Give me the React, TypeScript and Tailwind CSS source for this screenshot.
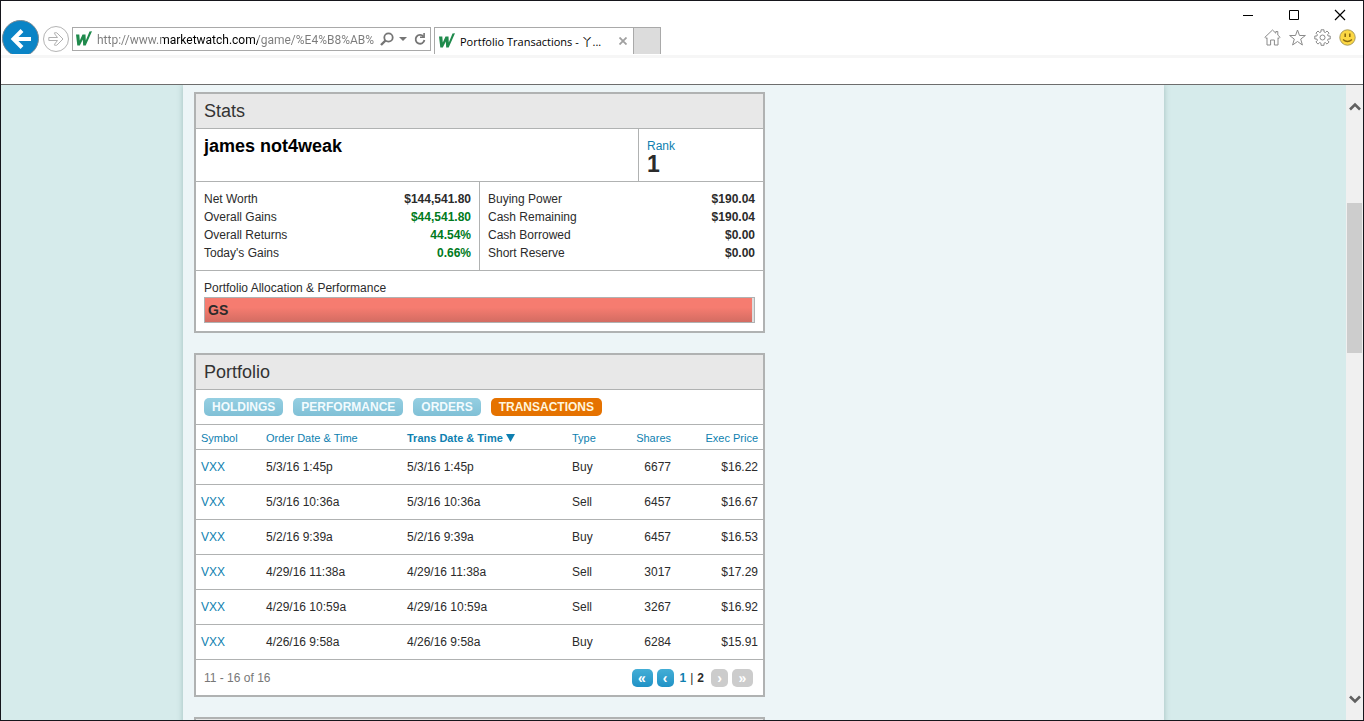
import type { ReactNode } from "react";

const accountStats = [
  { label: "Net Worth", value: "$144,541.80" },
  { label: "Overall Gains", value: "$44,541.80", gain: true },
  { label: "Overall Returns", value: "44.54%", gain: true },
  { label: "Today's Gains", value: "0.66%", gain: true },
];

const cashStats = [
  { label: "Buying Power", value: "$190.04" },
  { label: "Cash Remaining", value: "$190.04" },
  { label: "Cash Borrowed", value: "$0.00" },
  { label: "Short Reserve", value: "$0.00" },
];

const tabs = ["HOLDINGS", "PERFORMANCE", "ORDERS", "TRANSACTIONS"];

const transactions = [
  { symbol: "VXX", ordered: "5/3/16 1:45p", executed: "5/3/16 1:45p", type: "Buy", shares: 6677, price: "$16.22" },
  { symbol: "VXX", ordered: "5/3/16 10:36a", executed: "5/3/16 10:36a", type: "Sell", shares: 6457, price: "$16.67" },
  { symbol: "VXX", ordered: "5/2/16 9:39a", executed: "5/2/16 9:39a", type: "Buy", shares: 6457, price: "$16.53" },
  { symbol: "VXX", ordered: "4/29/16 11:38a", executed: "4/29/16 11:38a", type: "Sell", shares: 3017, price: "$17.29" },
  { symbol: "VXX", ordered: "4/29/16 10:59a", executed: "4/29/16 10:59a", type: "Sell", shares: 3267, price: "$16.92" },
  { symbol: "VXX", ordered: "4/26/16 9:58a", executed: "4/26/16 9:58a", type: "Buy", shares: 6284, price: "$15.91" },
];

function SiteIcon() {
  return (
    <svg viewBox="0 0 16 16" className="size-4 shrink-0" fill="#1f8a4c" aria-hidden="true">
      <path d="M0 3.500h3.300l.5 6 2.700-6h3l.3 6L13.500.5 16 .3 9.700 14.500H7.200L6.800 8.500 3.800 14.500H1.300z" />
    </svg>
  );
}

function WindowControls() {
  return (
    <div className="flex h-[26px] items-center justify-end gap-[23px] pt-0.5 pr-3">
      <button aria-label="Minimize" className="flex size-[23px] items-center justify-center">
        <svg viewBox="0 0 12 12" className="size-3" stroke="#000">
          <path d="M1 6.500h10" />
        </svg>
      </button>
      <button aria-label="Maximize" className="flex size-[23px] items-center justify-center">
        <svg viewBox="0 0 12 12" className="size-3" fill="none" stroke="#000">
          <path d="M1.500 1.500h9v9h-9z" />
        </svg>
      </button>
      <button aria-label="Close" className="flex size-[23px] items-center justify-center">
        <svg viewBox="0 0 12 12" className="size-3" stroke="#000" strokeWidth="1.200">
          <path d="m1 1 10 10M11 1 1 11" />
        </svg>
      </button>
    </div>
  );
}

function BrowserTools() {
  return (
    <div className="flex items-center justify-end gap-2 pt-0.5 pr-[7px]">
      <button aria-label="Home">
        <svg viewBox="0 0 17 17" className="size-[17px]" fill="none" stroke="#8a8a8a">
          <path d="M8.500 1 .9 8.300l1.200 1.200.9-.8v7.300h3.600v-5h3.800v5H14V8.700l.9.8 1.200-1.200-2.300-2.200V2.500h-2v1.700z" />
        </svg>
      </button>
      <button aria-label="Favorites">
        <svg viewBox="0 0 17 17" className="size-[17px]" fill="none" stroke="#8a8a8a">
          <path d="m8.500 1 2 5.500h5.900l-4.700 3.600 1.700 5.900-4.900-3.500L3.600 16l1.700-5.900L.6 6.500h5.900z" />
        </svg>
      </button>
      <button aria-label="Settings">
        <svg viewBox="0 0 17 17" className="size-[17px]" fill="none" stroke="#8a8a8a">
          <path d="M7 .8h3v2.100l1.400.6 1.600-1.500 2.100 2.100-1.500 1.600.5 1.300h2.100v3h-2.100l-.5 1.400 1.500 1.600-2.100 2.100-1.600-1.500-1.400.6v2.100H7v-2.100l-1.400-.6L4 15.100 1.900 13l1.500-1.600-.5-1.400H.8V7h2.100l.5-1.300-1.500-1.600L4 2l1.600 1.500L7 2.900z" />
          <circle cx="8.500" cy="8.500" r="2.500" />
        </svg>
      </button>
      <button aria-label="Feedback">
        <svg viewBox="0 0 17 17" className="size-[17px]" fill="none">
          <circle cx="8.500" cy="8.500" r="7.700" fill="#fcd743" stroke="#a89a5a" />
          <path d="M6.200 4.500v3.500M10.800 4.500v3.500" stroke="#8a6a10" strokeWidth="1.600" />
          <path d="M4 10.500q4.500 4 9 0" stroke="#8a6a10" strokeWidth="1.200" />
        </svg>
      </button>
    </div>
  );
}

function BrowserBar() {
  return (
    <header className="border-b border-[#6d6d6d] bg-white font-['Open_Sans',sans-serif]">
      <div className="flex h-[53px] items-start overflow-hidden">
        <button
          aria-label="Back"
          className="mt-[19px] ml-px flex size-[37px] shrink-0 items-center justify-center rounded-full border border-[#7a8a94] bg-[#0a84c6]"
        >
          <svg viewBox="0 0 22 20" className="h-5 w-[22px]" fill="none" stroke="#fff" strokeWidth="4">
            <path d="M21 10H4M12 1.500 3.500 10l8.500 8.500" />
          </svg>
        </button>
        <button
          aria-label="Forward"
          className="mt-[25px] ml-1 flex size-[26px] shrink-0 items-center justify-center rounded-full border border-[#b4b4b4]"
        >
          <svg viewBox="0 0 16 14" className="h-3.5 w-4" fill="none" stroke="#b0b0b0">
            <path d="M.8 5.500h8.700L6.500 1.700V.8h2.300L15 7l-6.200 6.200H6.500v-.9l3-3.800H.8z" />
          </svg>
        </button>
        <div className="mt-[26px] ml-[3px] flex h-6 w-[359px] items-center border border-[#a9a9a9] pr-1 pl-[3px]">
          <SiteIcon />
          {/* the host part of the address is darker than the rest */}
          <input
            type="text"
            aria-label="Address"
            defaultValue="http://www.marketwatch.com/game/%E4%B8%AB%"
            className="ml-[5px] w-[279px] min-w-0 bg-[linear-gradient(90deg,#7b7b7b_65px,#000_65px,#000_161px,#7b7b7b_161px)] bg-clip-text pt-0.5 font-['Roboto',sans-serif] text-xs text-transparent outline-none"
          />
          <button aria-label="Search" className="ml-1">
            <svg viewBox="0 0 14 14" className="size-3.5" fill="none" stroke="#757575" strokeWidth="1.800">
              <circle cx="8.500" cy="5.500" r="4.200" />
              <path d="M5.500 8.500 1 13" strokeWidth="2.400" />
            </svg>
          </button>
          <button aria-label="Show history" className="ml-[5px]">
            <svg viewBox="0 0 8 4" className="h-1 w-2" fill="#757575">
              <path d="M0 0h8L4 4z" />
            </svg>
          </button>
          <button aria-label="Refresh" className="ml-[7px]">
            <svg viewBox="0 0 12 14" className="h-3.5 w-3" fill="none" stroke="#757575" strokeWidth="1.800">
              <path d="M9.500 4.600A4.400 4.400 0 1 0 10.400 8" />
              <path d="M10.100 1v4.200H6" strokeWidth="1.600" />
            </svg>
          </button>
        </div>
        <div className="mt-[26px] ml-[3px] flex h-[27px] w-[199px] items-center border-t border-l border-[#a9a9a9] pl-1 text-[11px] text-black">
          <SiteIcon />
          <span className="ml-[5px] whitespace-nowrap pt-0.5 font-['Open_Sans','Noto_Sans_CJK_SC',sans-serif]">
            Portfolio Transactions - 丫...
          </span>
          <button aria-label="Close tab" className="mr-1.5 ml-auto">
            <svg viewBox="0 0 8 8" className="size-2" stroke="#a0a0a0" strokeWidth="1.800">
              <path d="m.5.5 7 7M7.500.5l-7 7" />
            </svg>
          </button>
        </div>
        <button aria-label="New tab" className="mt-[26px] h-[27px] w-7 border border-b-0 border-[#a9a9a9] bg-[#dcdcdc]" />
        <div className="ml-auto">
          <WindowControls />
          <BrowserTools />
        </div>
      </div>
      <div className="mt-px h-[3px] bg-[#f6f6f6]" />
      <div className="h-[26px]" />
    </header>
  );
}

function Scrollbar() {
  return (
    <div className="flex w-[17px] shrink-0 flex-col items-center bg-[#f0f0f0]">
      <button aria-label="Scroll up" className="flex h-[42px] items-center">
        <svg viewBox="0 0 12 9" className="h-[9px] w-3" fill="none" stroke="#606060" strokeWidth="2.600">
          <path d="M1 7.500 6 2.500l5 5" />
        </svg>
      </button>
      <div className="mt-[76px] h-[150px] w-[15px] bg-[#cdcdcd]" />
      <button aria-label="Scroll down" className="mt-auto flex h-[42px] items-center">
        <svg viewBox="0 0 12 9" className="h-[9px] w-3" fill="none" stroke="#606060" strokeWidth="2.600">
          <path d="m1 1.500 5 5 5-5" />
        </svg>
      </button>
    </div>
  );
}

function Panel({ title, children }: { title: string; children?: ReactNode }) {
  return (
    <section className="max-w-[571px] border-2 border-[#b0b2b2] bg-white">
      <h2 className="h-[35px] border-b border-[#b0b2b2] bg-[#e8e8e8] px-2 text-lg leading-[34px] text-[#333]">
        {title}
      </h2>
      {children}
    </section>
  );
}

function StatList({ items }: { items: { label: string; value: string; gain?: boolean }[] }) {
  return (
    <dl className="px-2 py-2 leading-[18px]">
      {items.map((item) => (
        <div key={item.label} className="flex justify-between">
          <dt>{item.label}</dt>
          <dd className={item.gain ? "font-bold text-[#007a1c]" : "font-bold"}>{item.value}</dd>
        </div>
      ))}
    </dl>
  );
}

function StatsPanel() {
  return (
    <Panel title="Stats">
      <div className="flex h-[53px] border-b border-[#b0b2b2]">
        <h3 className="flex-1 px-2 pt-1 text-lg leading-[26px] font-bold text-black">james not4weak</h3>
        <div className="w-[125px] border-l border-[#b0b2b2] px-2 pt-2">
          <p className="leading-[18px] text-[#0e7fb0]">Rank</p>
          <p className="text-[23px] leading-[18px] font-bold">1</p>
        </div>
      </div>
      <div className="flex border-b border-[#b0b2b2]">
        <div className="w-[284px] border-r border-[#b0b2b2]">
          <StatList items={accountStats} />
        </div>
        <div className="flex-1">
          <StatList items={cashStats} />
        </div>
      </div>
      <div className="px-2 pt-2 pb-2">
        <p className="leading-[18px]">Portfolio Allocation &amp; Performance</p>
        <div className="flex h-[26px] border border-[#b0b2b2] bg-[#dedede]">
          <div className="mr-0.5 flex-1 bg-linear-to-b from-[#f67c70] from-40% to-[#d36c62] pl-[3px] text-sm leading-6 font-bold">
            GS
          </div>
        </div>
      </div>
    </Panel>
  );
}

function Pager() {
  const live = "h-[18px] rounded-[5px] bg-linear-to-b from-[#43aed6] to-[#1f92c6] text-sm leading-4 font-bold text-white";
  const off = "h-[18px] rounded-[5px] bg-[#cccccc] text-sm leading-4 font-bold text-white";
  return (
    <nav aria-label="Pages" className="flex items-center">
      <button aria-label="First page" className={`${live} w-[21px]`}>«</button>
      <button aria-label="Previous page" className={`${live} ml-1 w-[17px]`}>‹</button>
      <a href="#page-1" className="ml-1.5 font-bold text-[#0e7fb0]">1</a>
      <span className="mx-1">|</span>
      <span className="font-bold">2</span>
      <button aria-label="Next page" disabled className={`${off} ml-[7px] w-[17px]`}>›</button>
      <button aria-label="Last page" disabled className={`${off} ml-1 w-[21px]`}>»</button>
    </nav>
  );
}

function PortfolioPanel() {
  return (
    <Panel title="Portfolio">
      <div className="flex h-[35px] items-center gap-2.5 border-b border-[#b0b2b2] px-2">
        {tabs.map((tab) => (
          <button
            key={tab}
            className={
              tab === "TRANSACTIONS"
                ? "h-[18px] rounded-[5px] bg-[#e57200] px-2 leading-[18px] font-bold text-[#fff5dc]"
                : "h-[18px] rounded-[5px] bg-linear-to-b from-[#95cfe2] to-[#80c0d6] px-2 leading-[18px] font-bold text-[#f2fbfe]"
            }
          >
            {tab}
          </button>
        ))}
      </div>
      <table className="w-full table-fixed border-separate border-spacing-0 text-left [&_td]:border-b [&_td]:border-[#b0b2b2] [&_td]:px-[5px] [&_th]:border-b [&_th]:border-[#b0b2b2] [&_th]:px-[5px] [&_th]:pt-0.5">
        <colgroup>
          <col className="w-[65px]" />
          <col className="w-[141px]" />
          <col className="w-[165px]" />
          <col className="w-[60px]" />
          <col className="w-[49px]" />
          <col />
        </colgroup>
        <thead>
          <tr className="h-[25px] text-[11px] text-[#0e7fb0]">
            <th className="font-normal">Symbol</th>
            <th className="font-normal">Order Date &amp; Time</th>
            <th className="font-bold">
              <span className="flex items-center gap-[3px]">
                Trans Date &amp; Time
                <svg viewBox="0 0 9 8" className="h-2 w-[9px]" fill="currentColor" aria-hidden="true">
                  <path d="M0 0h9L4.500 8z" />
                </svg>
              </span>
            </th>
            <th className="font-normal">Type</th>
            <th className="text-right font-normal">Shares</th>
            <th className="text-right font-normal">Exec Price</th>
          </tr>
        </thead>
        <tbody>
          {transactions.map((row) => (
            <tr key={row.ordered} className="h-[35px]">
              <td>
                <a href="#vxx" className="text-[#0e7fb0]">{row.symbol}</a>
              </td>
              <td>{row.ordered}</td>
              <td>{row.executed}</td>
              <td>{row.type}</td>
              <td className="text-right">{row.shares}</td>
              <td className="text-right">{row.price}</td>
            </tr>
          ))}
        </tbody>
      </table>
      <div className="flex h-[35px] items-center justify-between pr-2.5 pl-2">
        <p className="text-[#777]">11 - 16 of 16</p>
        <Pager />
      </div>
    </Panel>
  );
}

export default function App() {
  return (
    <div className="flex h-screen flex-col overflow-hidden border border-[#16161c] font-['Liberation_Sans',Arial,sans-serif]">
      <BrowserBar />
      <div className="flex min-h-0 flex-1">
        <div className="min-w-0 flex-1 overflow-hidden bg-[#d6ebeb]">
          <main className="mx-auto flex min-h-full max-w-[981px] flex-col gap-5 bg-[#edf5f7] pt-[7px] pl-[11px] text-xs text-[#2b2b2b] shadow-[0_0_6px_#a3bfbd]">
            <StatsPanel />
            <PortfolioPanel />
            <Panel title="" />
          </main>
        </div>
        <Scrollbar />
      </div>
    </div>
  );
}
